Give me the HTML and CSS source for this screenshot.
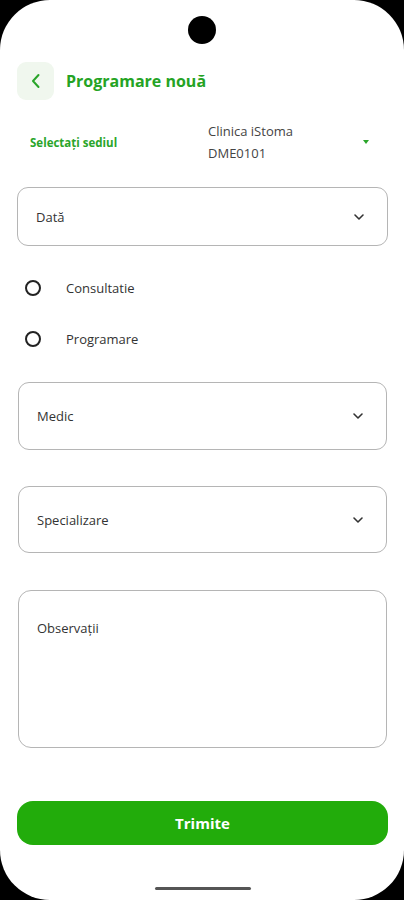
FILE: index.html
```html
<!DOCTYPE html>
<html lang="ro">
<head>
    <meta charset="UTF-8">
    <meta name="viewport" content="width=device-width, initial-scale=1.0">
    <title>Programare nouă</title>
    <link rel="stylesheet" href="styles.css">
</head>
<body>
    <div class="screen">
        <div class="camera"></div>

        <div class="header">
            <button class="back">
                <svg width="12" height="16" viewBox="0 0 12 16"><path d="M8.5 2 L3 8 L8.5 14" fill="none" stroke="#2aa52a" stroke-width="2" stroke-linecap="round" stroke-linejoin="round"/></svg>
            </button>
            <h1 class="title">Programare nouă</h1>
        </div>

        <div class="sediu">
            <span class="sediu-label">Selectați sediul</span>
            <span class="sediu-value">Clinica iStoma<br>DME0101</span>
            <span class="sediu-arrow"></span>
        </div>

        <div class="field field-date">
            <span>Dată</span>
            <svg class="chev" width="12" height="8" viewBox="0 0 12 8"><path d="M2 2 L6 6 L10 2" fill="none" stroke="#333" stroke-width="1.6" stroke-linecap="round" stroke-linejoin="round"/></svg>
        </div>

        <label class="radio first"><span class="dot"></span>Consultatie</label>
        <label class="radio"><span class="dot"></span>Programare</label>

        <div class="field field-medic">
            <span>Medic</span>
            <svg class="chev" width="12" height="8" viewBox="0 0 12 8"><path d="M2 2 L6 6 L10 2" fill="none" stroke="#333" stroke-width="1.6" stroke-linecap="round" stroke-linejoin="round"/></svg>
        </div>

        <div class="field field-spec">
            <span>Specializare</span>
            <svg class="chev" width="12" height="8" viewBox="0 0 12 8"><path d="M2 2 L6 6 L10 2" fill="none" stroke="#333" stroke-width="1.6" stroke-linecap="round" stroke-linejoin="round"/></svg>
        </div>

        <div class="notes">Observații</div>

        <button class="submit">Trimite</button>

        <div class="homebar"></div>
    </div>
</body>
</html>
```

FILE: styles.css
```css
body {
    margin: 0;
    background: #000;
    font-family: "Open Sans", "Noto Sans", sans-serif;
}

.screen {
    position: relative;
    height: 900px;
    background: #fff;
    border-radius: 50px;
    padding: 0 16px 0 17px;
    box-sizing: border-box;
    display: flex;
    flex-direction: column;
    overflow: hidden;
}

.camera {
    position: absolute;
    top: 16px;
    left: 188px;
    width: 28px;
    height: 28px;
    border-radius: 50%;
    background: #000;
}

.header {
    display: flex;
    align-items: center;
    margin-top: 62px;
    height: 38px;
}

.back {
    width: 37px;
    height: 38px;
    border: none;
    border-radius: 9px;
    background: #f0f7ee;
    display: flex;
    align-items: center;
    justify-content: center;
    padding: 0;
}

.title {
    margin: 0 0 0 12px;
    font-size: 16px;
    font-weight: 700;
    color: #25a324;
}

.sediu {
    display: flex;
    align-items: center;
    margin-top: 21px;
    height: 42px;
}

.sediu-label {
    width: 178px;
    padding-left: 13px;
    font-size: 11.5px;
    font-weight: 700;
    color: #2aa52a;
}

.sediu-value {
    flex: 1;
    font-size: 13px;
    line-height: 22px;
    color: #444;
}

.sediu-arrow {
    width: 0;
    height: 0;
    margin-right: 19px;
    border-left: 3.5px solid transparent;
    border-right: 3.5px solid transparent;
    border-top: 4px solid #2aa52a;
}

.field {
    display: flex;
    align-items: center;
    justify-content: space-between;
    border: 1px solid #b5b5b5;
    border-radius: 11px;
    padding: 0 22px 0 18px;
    font-size: 13px;
    color: #333;
    box-sizing: border-box;
}

.field-date {
    margin-top: 24px;
    height: 59px;
}

.field-medic {
    margin: 31px 1px 0;
    height: 68px;
}

.field-spec {
    margin: 36px 1px 0;
    height: 67px;
}

.radio {
    display: flex;
    align-items: center;
    height: 24px;
    margin-top: 27px;
    padding-left: 8px;
    font-size: 13px;
    color: #333;
}

.radio.first {
    margin-top: 30px;
}

.dot {
    width: 12px;
    height: 12px;
    border: 2px solid #222;
    border-radius: 50%;
    margin-right: 25px;
}

.notes {
    margin: 37px 1px 0;
    height: 158px;
    border: 1px solid #b5b5b5;
    border-radius: 13px;
    padding: 28px 18px;
    box-sizing: border-box;
    font-size: 13px;
    color: #333;
}

.submit {
    margin-top: 53px;
    height: 44px;
    border: none;
    border-radius: 16px;
    background: #22ac0b;
    color: #fff;
    font-family: "Open Sans", "Noto Sans", sans-serif;
    font-size: 15px;
    font-weight: 700;
}

.homebar {
    position: absolute;
    bottom: 10px;
    left: 155px;
    width: 96px;
    height: 3px;
    border-radius: 2px;
    background: #555;
}
```
